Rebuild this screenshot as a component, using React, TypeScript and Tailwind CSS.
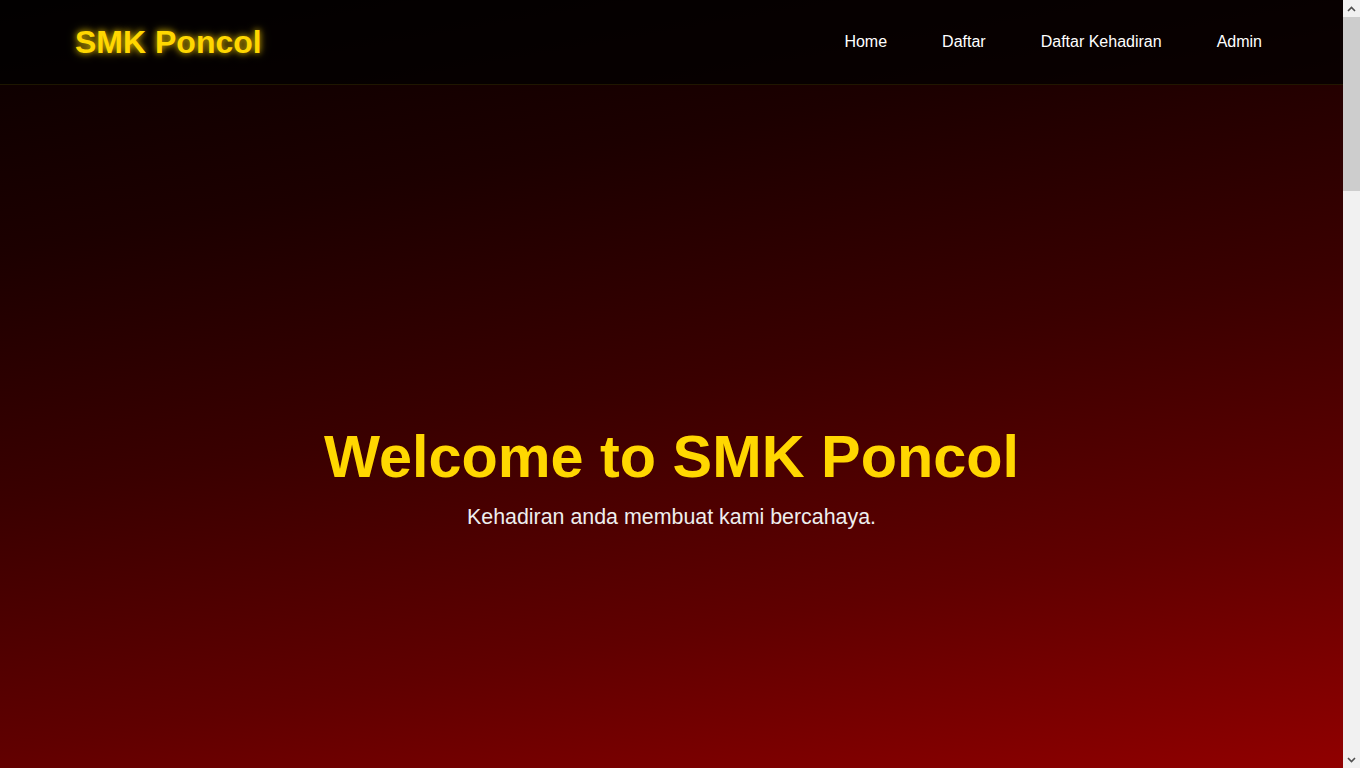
export default function App() {
  const links = ["Home", "Daftar", "Daftar Kehadiran", "Admin"];

  return (
    <div className="h-screen flex overflow-hidden font-['Liberation_Sans',Arial,sans-serif]">
      <main className="flex-1 overflow-y-auto [scrollbar-width:none] bg-[#0a0000]">
        {/* first screen: header + hero share one gradient */}
        <div className="bg-[linear-gradient(170deg,#080000_0%,#1c0000_23%,#3a0000_46%,#600000_69%,#900000_92%,#a20000_100%)]">
          <header className="h-[85px] flex items-center justify-between pl-[75px] pr-[81px] bg-black/70 border-b border-[#ffd700]/10">
            <div className="text-[32px] font-bold text-[#ffd700] [text-shadow:0_0_6px_rgba(255,215,0,0.8),0_0_12px_rgba(255,215,0,0.35)]">
              SMK Poncol
            </div>
            <nav className="flex items-center gap-[55px]">
              {links.map((l) => (
                <a key={l} href="#" className="text-white text-base">
                  {l}
                </a>
              ))}
            </nav>
          </header>

          <section className="h-[768px] flex flex-col items-center justify-center pt-[16px] text-center">
            <h1 className="text-[59.4px] leading-[1.2] font-bold text-[#ffd700]">
              Welcome to SMK Poncol
            </h1>
            <p className="mt-2 text-[21.4px] leading-[1.5] text-[#eeeeee]">
              Kehadiran anda membuat kami bercahaya.
            </p>
          </section>
        </div>

        {/* rest of the page below the fold */}
        <section className="min-h-[2390px] bg-[#0a0000]" />
      </main>

      {/* browser scrollbar */}
      <aside className="w-[17px] shrink-0 flex flex-col bg-[#f1f1f1]">
        <div className="h-[17px] flex items-center justify-center">
          <svg width="9" height="6" viewBox="0 0 9 6">
            <path d="M1 5 L4.5 1.5 L8 5" fill="none" stroke="#505050" strokeWidth="1.6" />
          </svg>
        </div>
        <div className="h-[174px] bg-[#cdcdcd]" />
        <div className="flex-1" />
        <div className="h-[17px] flex items-center justify-center">
          <svg width="9" height="6" viewBox="0 0 9 6">
            <path d="M1 1 L4.5 4.5 L8 1" fill="none" stroke="#505050" strokeWidth="1.6" />
          </svg>
        </div>
      </aside>
    </div>
  );
}
